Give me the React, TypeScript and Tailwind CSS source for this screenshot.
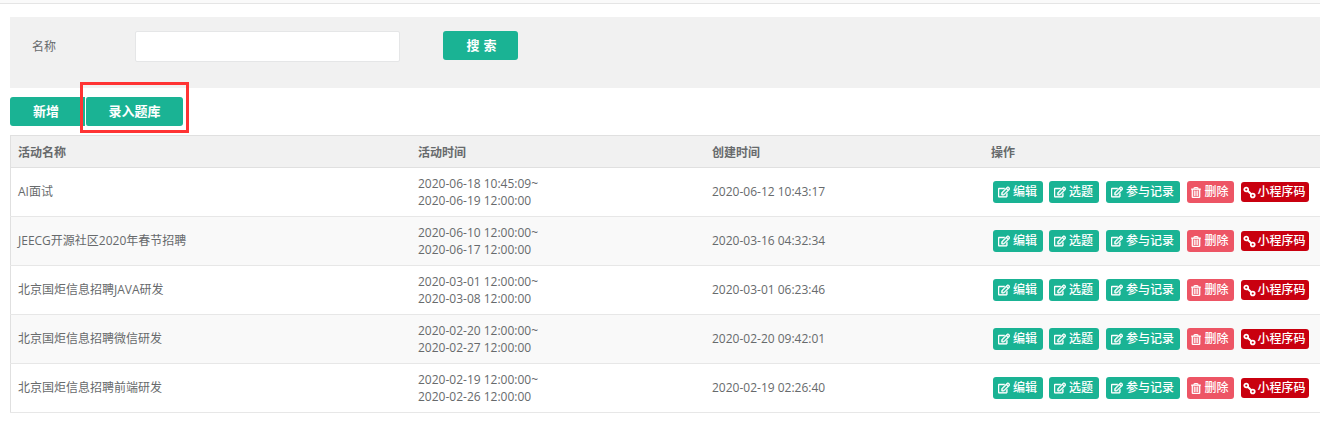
import React from 'react';
import { FaRegEdit, FaRegTrashAlt } from 'react-icons/fa';

const rows = [
  { name: 'AI面试', start: '2020-06-18 10:45:09~', end: '2020-06-19 12:00:00', created: '2020-06-12 10:43:17' },
  { name: 'JEECG开源社区2020年春节招聘', start: '2020-06-10 12:00:00~', end: '2020-06-17 12:00:00', created: '2020-03-16 04:32:34' },
  { name: '北京国炬信息招聘JAVA研发', start: '2020-03-01 12:00:00~', end: '2020-03-08 12:00:00', created: '2020-03-01 06:23:46' },
  { name: '北京国炬信息招聘微信研发', start: '2020-02-20 12:00:00~', end: '2020-02-27 12:00:00', created: '2020-02-20 09:42:01' },
  { name: '北京国炬信息招聘前端研发', start: '2020-02-19 12:00:00~', end: '2020-02-26 12:00:00', created: '2020-02-19 02:26:40' },
];

// chain icon, runs from top left to bottom right like the old fa-link
const ChainIcon = () => (
  <svg viewBox="0 0 14 14" className="h-[13px] w-[13px] shrink-0" fill="none" stroke="currentColor">
    <circle cx="3.5" cy="3.8" r="2.1" strokeWidth="1.9" />
    <circle cx="10.5" cy="10.2" r="2.1" strokeWidth="1.9" />
    <path d="M5 5.2 L9 8.8" strokeWidth="2.2" />
  </svg>
);

const App = () => {
  return (
    <div className="h-[428px] w-[1320px] overflow-hidden bg-white text-[12px] text-[#676a6c] font-['Open_Sans','Noto_Sans_CJK_SC',sans-serif]">
      <div className="h-[4px] border-b border-[#e5e5e5] bg-[#fafafa]" />

      {/* Search */}
      <div className="mt-[13px] ml-[10px] flex h-[71px] items-start bg-[#f1f1f1] pt-[14px]">
        <label className="ml-[22px] w-[103px] pt-[7px] text-[#676a6c]">名称</label>
        <input type="text" className="h-[31px] w-[265px] rounded-[2px] border border-[#e5e6e7] bg-white" />
        <button className="ml-[43px] h-[29px] w-[75px] rounded-[3px] bg-[#1ab394] pl-[6px] text-[13px] font-bold tracking-[4px] text-white">搜索</button>
      </div>

      {/* Toolbar */}
      <div className="relative mt-[9px] ml-[10px] flex h-[29px]">
        <button className="h-[29px] w-[75px] rounded-l-[3px] bg-[#1ab394] pr-[3px] text-[13px] font-bold text-white">新增</button>
        <button className="h-[29px] w-[98px] rounded-[3px] border-l border-white bg-[#1ab394] text-[13px] font-bold text-white">录入题库</button>
        <div className="absolute top-[-15px] left-[70px] h-[51px] w-[109px] border-[3px] border-[#ff3333]" />
      </div>

      {/* Table */}
      <table className="mt-[9px] ml-[10px] w-[1310px] table-fixed border-collapse border-l border-[#e0e0e0]">
        <colgroup>
          <col className="w-[400px]" />
          <col className="w-[294px]" />
          <col className="w-[279px]" />
          <col />
        </colgroup>
        <thead>
          <tr className="h-[32px] border-y border-[#e0e0e0] bg-[#f1f1f1] text-left font-bold">
            <th className="pt-[2px] pl-[7px]">活动名称</th>
            <th className="pt-[2px] pl-[7.5px]">活动时间</th>
            <th className="pt-[2px] pl-[7.5px]">创建时间</th>
            <th className="pt-[2px] pl-[7.5px]">操作</th>
          </tr>
        </thead>
        <tbody>
          {rows.map((row, i) => (
            <tr key={row.created} className={`h-[49px] border-b border-[#e7e7e7] ${i % 2 === 1 ? 'bg-[#f9f9f9]' : 'bg-white'}`}>
              <td className="pl-[7px]">{row.name}</td>
              <td className="pl-[7.5px] leading-[17px]">
                <div>{row.start}</div>
                <div>{row.end}</div>
              </td>
              <td className="pl-[7.5px]">{row.created}</td>
              <td className="pl-[9px]">
                <div className="flex items-center font-medium text-white">
                  <a className="flex h-[22px] w-[50px] items-center justify-center gap-[3px] rounded-[3px] bg-[#1ab394]">
                    <FaRegEdit className="h-[12px] w-[12px] stroke-[24]" />编辑
                  </a>
                  <a className="ml-[6px] flex h-[22px] w-[50px] items-center justify-center gap-[3px] rounded-[3px] bg-[#1ab394]">
                    <FaRegEdit className="h-[12px] w-[12px] stroke-[24]" />选题
                  </a>
                  <a className="ml-[7px] flex h-[22px] w-[74px] items-center justify-center gap-[3px] rounded-[3px] bg-[#1ab394]">
                    <FaRegEdit className="h-[12px] w-[12px] stroke-[24]" />参与记录
                  </a>
                  <a className="ml-[7px] flex h-[22px] w-[47px] items-center justify-center gap-[3px] rounded-[3px] bg-[#ed5565]">
                    <FaRegTrashAlt className="h-[11px] w-[10px] stroke-[20]" />删除
                  </a>
                  <a className="ml-[7px] flex h-[20px] w-[68px] items-center justify-center gap-[1px] rounded-[3px] bg-[#c9000f]">
                    <ChainIcon />小程序码
                  </a>
                </div>
              </td>
            </tr>
          ))}
        </tbody>
      </table>
    </div>
  );
};

export default App;
